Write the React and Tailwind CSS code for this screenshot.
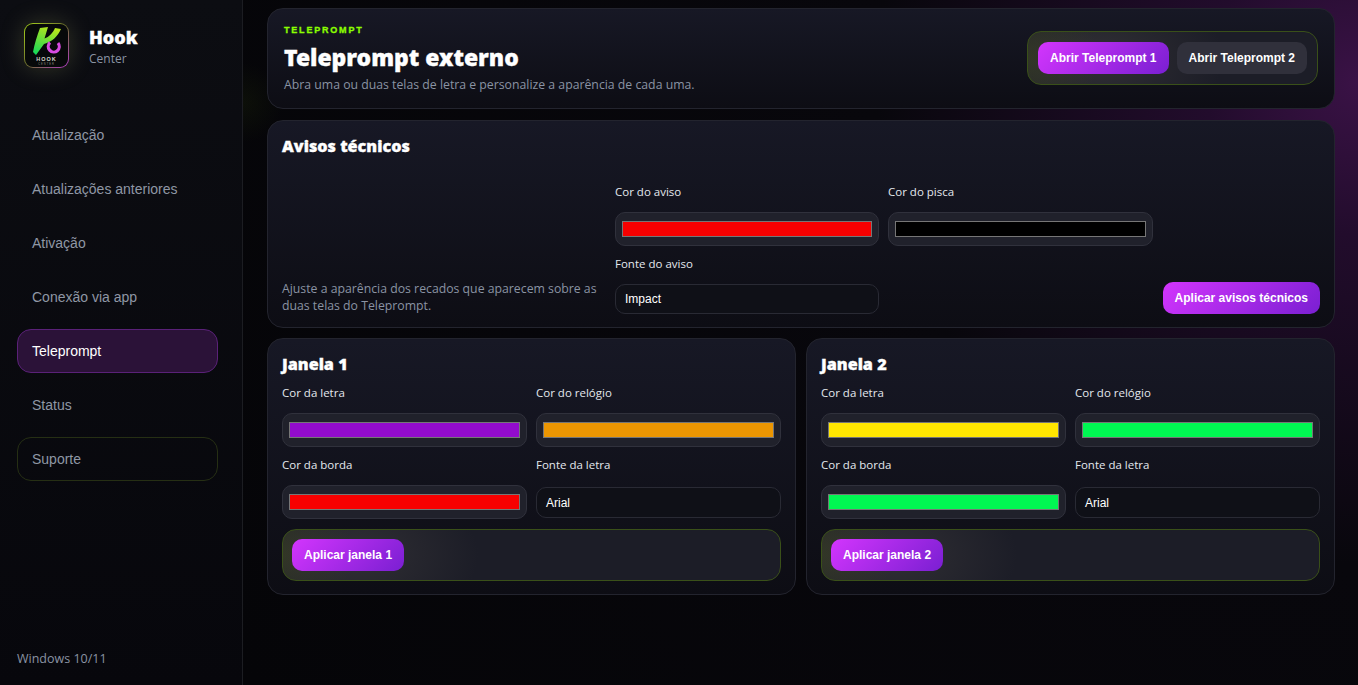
const heading = "font-['Noto_Sans',sans-serif] font-black text-white [-webkit-text-stroke:0.35px_#ffffff]";
const arial = "font-['Liberation_Sans',Arial,sans-serif]";
const applyBtn =
  "h-8 rounded-[10px] bg-[linear-gradient(135deg,#d335fd,#7a1fd2)] px-3 text-xs font-bold text-white font-['Liberation_Sans',Arial,sans-serif]";
const card =
  "rounded-2xl border border-[#23242e] bg-[linear-gradient(180deg,#171825,#0d0d14)]";
const glowBox =
  "rounded-[14px] border border-[#3a5019] bg-[radial-gradient(circle_at_0%_50%,rgba(70,80,30,0.4),transparent_70px),radial-gradient(ellipse_125px_80px_at_70px_50%,#302f34,#1c1d27)]";
const label = "h-[20px] font-['Open_Sans',sans-serif] text-[11.5px] leading-[15px] text-[#e4e8ee]";

const menu = [
  { label: "Atualização" },
  { label: "Atualizações anteriores" },
  { label: "Ativação" },
  { label: "Conexão via app" },
  { label: "Teleprompt", active: true },
  { label: "Status" },
  { label: "Suporte", outlined: true },
];

function Logo() {
  return (
    <div className="h-[45px] w-[45px] shrink-0 rounded-[9px] bg-[linear-gradient(135deg,#a6d41a,#6f7030_50%,#b53bc8)] p-px shadow-[0_0_24px_rgba(190,200,120,0.22)]">
      <svg viewBox="0 0 43 43" className="h-full w-full rounded-[8px] bg-[#07090a]">
        <defs>
          <linearGradient id="hookGreen" x1="0.6" y1="0" x2="0.2" y2="1">
            <stop offset="0" stopColor="#b6e51c" />
            <stop offset="1" stopColor="#16d85a" />
          </linearGradient>
        </defs>
        {/* H with the slanted right arm */}
        <path
          d="M15 4 L23 3 L19.5 14.5 C24 13 28 9 30 4 L36 5 C33 12 27 18 19 20 L11 31 L8 28 C9.5 20 12 12 15 4 Z"
          fill="url(#hookGreen)"
        />
        {/* open ring under the arm */}
        <path d="M25 18.5 A5.5 5.5 0 1 0 33 19" fill="none" stroke="#d64be0" strokeWidth="3.2" />
        <text x="21.5" y="36.5" textAnchor="middle" fontSize="5.5" fontWeight="700" letterSpacing="1" fill="#d8d8d0" fontFamily="Liberation Sans">
          HOOK
        </text>
        <text x="21.5" y="40.5" textAnchor="middle" fontSize="2.6" letterSpacing="1" fill="#8b8b80" fontFamily="Liberation Sans">
          CENTER
        </text>
      </svg>
    </div>
  );
}

function Sidebar() {
  return (
    <aside className="flex h-[685px] w-[243px] shrink-0 flex-col border-r border-[#1c1d22] bg-[linear-gradient(180deg,#0c0d12,#07070c)] pr-6 pl-[17px]">
      <div className="flex items-center gap-5 pt-[23px] pl-[7px]">
        <Logo />
        <div className="pt-[2px]">
          <div className={`${heading} text-lg leading-[24px]`}>Hook</div>
          <div className="mt-px font-['Open_Sans',sans-serif] text-xs leading-[18px] text-[#8a93a3]">Center</div>
        </div>
      </div>
      <nav className={`${arial} mt-[45px] flex flex-col gap-[10px] text-sm`}>
        {menu.map((item) => (
          <div
            key={item.label}
            className={`flex h-11 items-center rounded-[14px] border px-[14px] ${
              item.active
                ? "border-[#5a2178] bg-[#2b1238] text-white"
                : item.outlined
                  ? "border-[#262f14] text-[#8f97a5]"
                  : "border-transparent text-[#8f97a5]"
            }`}
          >
            {item.label}
          </div>
        ))}
      </nav>
      <div className="mt-auto pb-[18px] font-['Open_Sans',sans-serif] text-[12.5px] leading-[17px] text-[#8a93a3]">
        Windows 10/11
      </div>
    </aside>
  );
}

function ColorField({ name, color }) {
  return (
    <div>
      <div className={label}>{name}</div>
      <div className="mt-2 h-[34px] rounded-[10px] border border-[#30313c] bg-[#20212b] px-[6px] py-2">
        <div className="h-4 border border-[#767676]" style={{ backgroundColor: color }} />
      </div>
    </div>
  );
}

function FontField({ name, value, tall }) {
  return (
    <div>
      <div className={label}>{name}</div>
      <div
        className={`${arial} flex items-center rounded-[10px] border border-[#292a34] bg-[#0f1017] px-[9px] text-xs text-white ${
          tall ? "mt-[10px] h-[31px]" : "mt-2 h-[30px]"
        }`}
      >
        {value}
      </div>
    </div>
  );
}

function Janela({ num, letra, relogio, borda }) {
  return (
    <section className={`${card} h-[257px] flex-1 px-[14px] pt-[13px]`}>
      <h2 className={`${heading} text-[16.2px] leading-[24px]`}>Janela {num}</h2>
      <div className="mt-[9px] grid grid-cols-2 gap-x-[9px] gap-y-[10px]">
        <ColorField name="Cor da letra" color={letra} />
        <ColorField name="Cor do relógio" color={relogio} />
        <ColorField name="Cor da borda" color={borda} />
        <FontField name="Fonte da letra" value="Arial" tall />
      </div>
      <div className={`${glowBox} mt-[10px] flex h-[52px] items-center px-[9px]`}>
        <button className={applyBtn}>Aplicar janela {num}</button>
      </div>
    </section>
  );
}

export default function App() {
  return (
    <div className="flex h-[685px] w-[1358px] overflow-hidden bg-[#050508]">
      <Sidebar />
      <main className="flex-1 bg-[radial-gradient(circle_at_0%_15%,rgba(50,70,10,0.16),transparent_40px),radial-gradient(circle_at_100%_12%,#3a1246_0%,#220c2c_12%,#08070c_38%,#050508_100%)] pt-2 pr-[23px] pl-6">
        <section className={`${card} flex h-[101px] items-center justify-between px-4`}>
          <div>
            <div className={`${arial} text-[9px] leading-[11px] font-bold tracking-[1.8px] text-[#8cff00] [-webkit-text-stroke:0.3px_#8cff00]`}>
              TELEPROMPT
            </div>
            <h1 className={`${heading} mt-[6px] text-[22.9px] leading-[31px]`}>Teleprompt externo</h1>
            <p className="mt-[3px] font-['Open_Sans',sans-serif] text-[12.27px] leading-[17px] text-[#8a93a3]">
              Abra uma ou duas telas de letra e personalize a aparência de cada uma.
            </p>
          </div>
          <div className={`${glowBox} mb-px flex h-[54px] items-center gap-2 px-[10px]`}>
            <button className={applyBtn}>Abrir Teleprompt 1</button>
            <button className={`${arial} h-8 rounded-[10px] bg-[#30303b] px-3 text-xs font-bold text-white`}>
              Abrir Teleprompt 2
            </button>
          </div>
        </section>

        <section className={`${card} mt-[11px] h-[208px] px-[14px] pt-[13px]`}>
          <h2 className={`${heading} text-[16.2px] leading-[24px]`}>Avisos técnicos</h2>
          <div className="mt-[26px] grid grid-cols-[324px_264px_265px_158px] items-end gap-x-[9px] gap-y-[10px]">
            <div />
            <ColorField name="Cor do aviso" color="#f70000" />
            <ColorField name="Cor do pisca" color="#000000" />
            <div />
            <p className="font-['Open_Sans',sans-serif] text-[12.27px] leading-[17px] text-[#8a93a3]">
              Ajuste a aparência dos recados que aparecem sobre as duas telas do Teleprompt.
            </p>
            <FontField name="Fonte do aviso" value="Impact" />
            <div />
            <button className={`${applyBtn} justify-self-end whitespace-nowrap`}>Aplicar avisos técnicos</button>
          </div>
        </section>

        <div className="mt-[10px] flex gap-[10px]">
          <Janela num={1} letra="#930bcc" relogio="#ec9602" borda="#f70000" />
          <Janela num={2} letra="#ffe600" relogio="#00f752" borda="#00f752" />
        </div>
      </main>
    </div>
  );
}
